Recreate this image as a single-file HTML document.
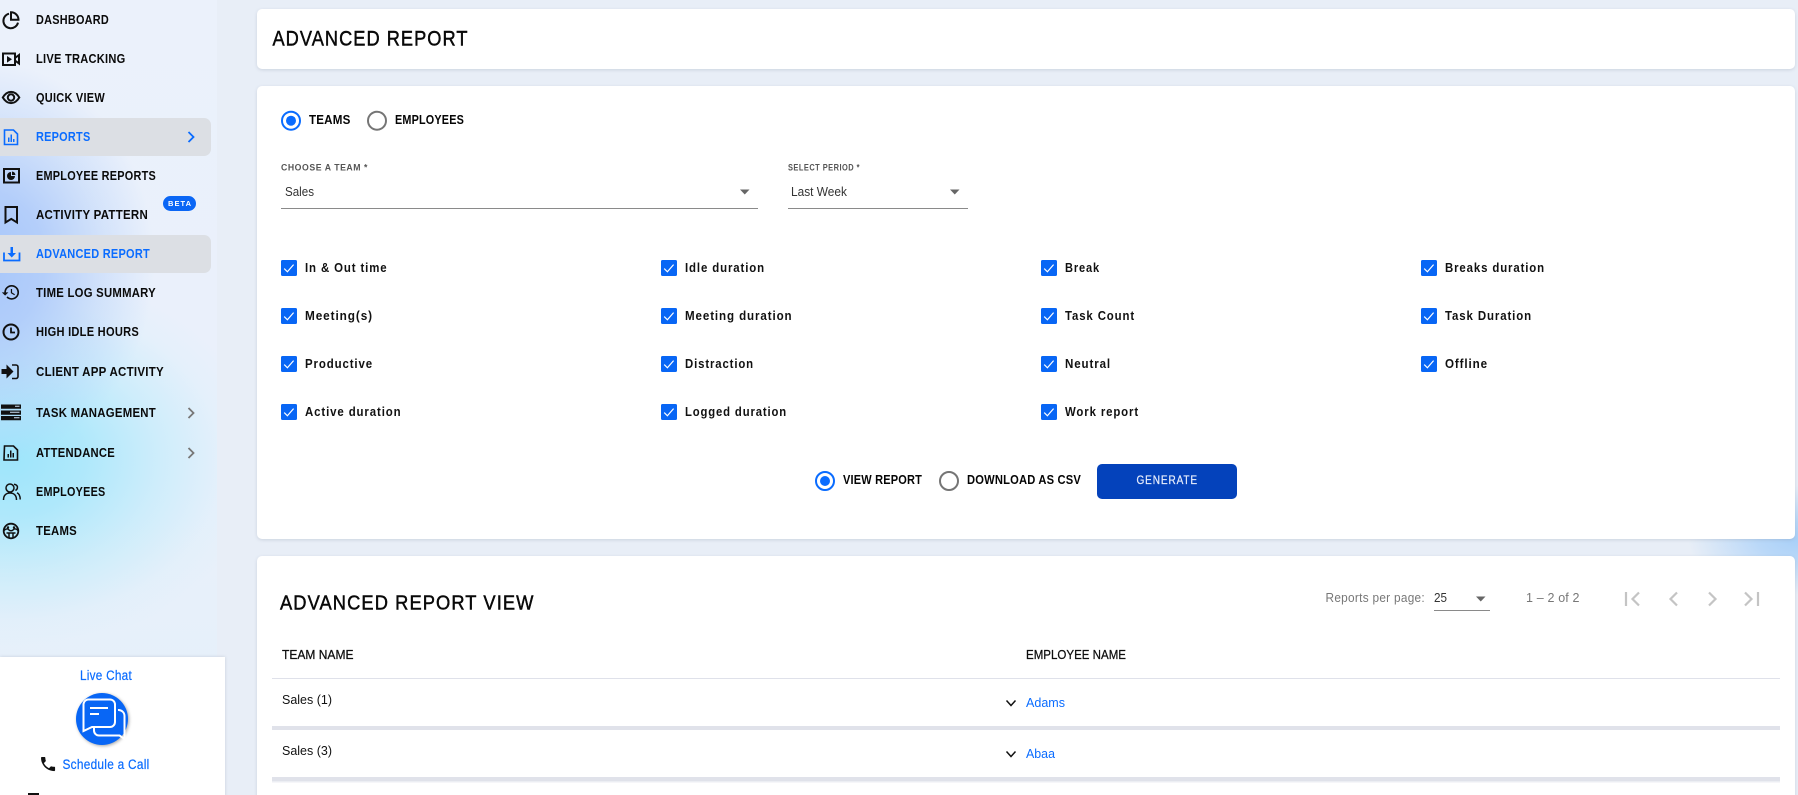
<!DOCTYPE html>
<html lang="en"><head><meta charset="utf-8"><title>Advanced Report</title>
<style>
html,body{margin:0;padding:0;width:1798px;height:795px;overflow:hidden;background:#e8eef7}
#bg{position:absolute;left:0;top:0;width:1798px;height:795px;background:
radial-gradient(ellipse 110px 55px at 1798px 540px,#a9d0f8 0%,rgba(169,208,248,.75) 35%,rgba(232,238,247,0) 100%),
#e8eef7}
#side{position:absolute;left:0;top:0;width:217px;height:795px;background:
radial-gradient(ellipse 170px 200px at -15px 262px,rgba(166,198,250,1) 0%,rgba(170,200,250,.85) 35%,rgba(176,205,250,.4) 70%,rgba(176,205,250,0) 100%),
radial-gradient(ellipse 250px 190px at 10px 460px,rgba(158,229,251,1) 0%,rgba(165,231,251,.85) 30%,rgba(180,234,251,.5) 60%,rgba(200,238,251,.15) 85%,rgba(200,238,251,0) 100%),
linear-gradient(#ebf1fb 0%,#e9f0fb 60%,#e4eff9 100%)}
svg{position:absolute;left:0;top:0}
text{font-family:"Liberation Sans",sans-serif;white-space:pre}
.n{font-size:13px;font-weight:700;fill:#0a0a0a;letter-spacing:.3px}
.b{fill:#0a6cff}
.c{font-size:13px;font-weight:700;fill:#111;letter-spacing:1px}
.r{font-size:12.5px;font-weight:700;fill:#050505;letter-spacing:.2px}
.l{font-size:9.5px;font-weight:700;fill:#555;letter-spacing:.6px}
.v{font-size:13px;fill:#333}
.g{font-size:12.5px;fill:#777}
.t{font-size:13px;fill:#111}
.h{stroke:#000;stroke-width:.3px}
.i{fill:none;stroke:#111;stroke-width:2}
.card{fill:#fff;filter:drop-shadow(0 1px 1.5px rgba(120,130,150,.25))}
</style></head><body>
<div id="bg"></div><div id="side"></div>
<svg width="1798" height="795" viewBox="0 0 1798 795" xmlns="http://www.w3.org/2000/svg">
<defs>
<g id="cb"><rect width="16" height="16" rx="1.5" fill="#0866f5"/><path d="M3.2 8.6l3.2 3.2 6.2-7.2" fill="none" stroke="#fff" stroke-width="1.2"/></g>
<g id="ron"><circle r="9" fill="none" stroke="#0a6cff" stroke-width="2"/><circle r="5" fill="#0a6cff"/></g>
<g id="roff"><circle r="9" fill="none" stroke="#757575" stroke-width="2"/></g>
</defs>

<!-- cards -->
<rect class="card" x="257" y="9" width="1538" height="60" rx="5"/>
<rect class="card" x="257" y="86" width="1538" height="453" rx="5"/>
<rect class="card" x="257" y="556" width="1538" height="260" rx="5"/>

<!-- sidebar highlights -->
<rect x="-10" y="118" width="221" height="38" rx="7" fill="#dcdfe4"/>
<rect x="-10" y="235" width="221" height="38" rx="7" fill="#dcdfe4"/>

<!-- sidebar icons -->
<path class="i" d="M9 13.7A7.4 7.4 0 1 0 18 22.6" stroke-width="1.8"/><path class="i" d="M11 12.3a7.5 7.5 0 0 1 7.5 7.5H11z" stroke-width="1.8"/>
<rect class="i" x="3" y="53.5" width="12" height="11.5"/><path d="M7 56l5 3.3-5 3.3z" fill="#111"/><path class="i" d="M15 58l4-3v8.500l-4-3"/>
<path class="i" d="M2.800 97.500c4.500-7.500 12-7.500 16.500 0c-4.500 7.500-12 7.500-16.500 0z" stroke-width="1.600"/><circle class="i" cx="11" cy="97.500" r="3.200" stroke-width="1.600"/>
<path d="M4.500 130h9l4 4v10.500h-13z" fill="none" stroke="#0a6cff" stroke-width="1.600"/><path d="M8 137.500h1.500v4.500H8zM10.500 134.500H12v7.500h-1.500zM13 139h1.500v3H13z" fill="#0a6cff"/>
<rect class="i" x="4" y="169" width="15" height="13.500"/><path d="M11 172a4 4 0 1 0 4 4h-4z" fill="#111"/><path d="M12 171.500a4 4 0 0 1 3.500 3.500H12z" fill="#111"/>
<path class="i" d="M5.500 207h11.500v15.500l-5.750-3.600-5.750 3.600z" stroke-width="1.700"/>
<path d="M4 252.500v8h15.500v-8" fill="none" stroke="#0a6cff" stroke-width="1.800"/><path d="M10.500 247h2.500v6h3l-4.250 4.500L7.500 253h3z" fill="#0a6cff"/>
<g transform="translate(1 282.500) scale(.82)"><path d="M13 3a9 9 0 0 0-9 9H1l3.890 3.890.07.140L9 12H6c0-3.870 3.130-7 7-7s7 3.130 7 7-3.130 7-7 7c-1.930 0-3.680-.790-4.940-2.060l-1.420 1.420A8.954 8.954 0 0 0 13 21a9 9 0 0 0 0-18zm-1 5v5l4.280 2.540.720-1.210-3.500-2.080V8H12z" fill="#111"/></g>
<circle class="i" cx="11" cy="332" r="7.500" stroke-width="1.800"/><path d="M11 327.500v5h4" fill="none" stroke="#111" stroke-width="1.800"/>
<path d="M1.500 369h5v-4.500l7 7-7 7V374h-5z" fill="#111"/><path d="M12 365h4a2 2 0 0 1 2 2v9.500a2 2 0 0 1-2 2h-4" fill="none" stroke="#111" stroke-width="1.600"/>
<path d="M1 404.500h20v4.300H1zM1 410.500h20v4.300H1zM1 416h20v4.300H1z" fill="#111"/><path d="M15 406.200h4.500M10 412.200h9.500M14 417.700h5.500" stroke="#cfe3f8" stroke-width="1"/>
<path d="M4.500 446h9l4 4v10h-13.500z" fill="none" stroke="#111" stroke-width="1.600"/><path d="M7.500 454h1.500v3.500H7.500zM10 450.500h1.500v7H10zM12.500 453h1.500v4.500h-1.500z" fill="#111"/>
<circle cx="10" cy="488" r="4" fill="none" stroke="#111" stroke-width="1.500"/><path d="M3.500 500c0-4.800 2.800-7 6.500-7s6.500 2.200 6.500 7" fill="none" stroke="#111" stroke-width="1.500"/><path d="M14 484.200c2.600.2 3.800 2 3.400 3.800-.2 1.200-1 2-2 2.400M17 492.800c2 .8 3.200 3 3.200 6.700" fill="none" stroke="#111" stroke-width="1.500"/>
<circle cx="11" cy="531" r="7.300" fill="none" stroke="#111" stroke-width="1.800"/><path d="M4 530.500c2-2 4-2 5-.5 1 1 3 1 4 0 1-1.500 3.500-1.500 5 .5M6.500 533h9M9 533v4.500M13 533v4.500" fill="none" stroke="#111" stroke-width="1.500"/><circle cx="8" cy="527.500" r="1.200" fill="#111"/><circle cx="14" cy="527.500" r="1.200" fill="#111"/>

<path d="M188.500 132l5 5-5 5" fill="none" stroke="#0a6cff" stroke-width="1.800"/>
<path d="M188.500 408l5 5-5 5M188.500 448l5 5-5 5" fill="none" stroke="#777" stroke-width="1.800"/>

<!-- sidebar text -->
<text class="n" x="36" y="24" textLength="73" lengthAdjust="spacingAndGlyphs">DASHBOARD</text>
<text class="n" x="36" y="63" textLength="89.500" lengthAdjust="spacingAndGlyphs">LIVE TRACKING</text>
<text class="n" x="36" y="102" textLength="69" lengthAdjust="spacingAndGlyphs">QUICK VIEW</text>
<text class="n b" x="36" y="141" textLength="54.500" lengthAdjust="spacingAndGlyphs">REPORTS</text>
<text class="n" x="36" y="180" textLength="120" lengthAdjust="spacingAndGlyphs">EMPLOYEE REPORTS</text>
<text class="n" x="36" y="219" textLength="112" lengthAdjust="spacingAndGlyphs">ACTIVITY PATTERN</text>
<text class="n b" x="36" y="258" textLength="114" lengthAdjust="spacingAndGlyphs">ADVANCED REPORT</text>
<text class="n" x="36" y="297" textLength="120" lengthAdjust="spacingAndGlyphs">TIME LOG SUMMARY</text>
<text class="n" x="36" y="336" textLength="103" lengthAdjust="spacingAndGlyphs">HIGH IDLE HOURS</text>
<text class="n" x="36" y="376" textLength="128" lengthAdjust="spacingAndGlyphs">CLIENT APP ACTIVITY</text>
<text class="n" x="36" y="417" textLength="120" lengthAdjust="spacingAndGlyphs">TASK MANAGEMENT</text>
<text class="n" x="36" y="457" textLength="79" lengthAdjust="spacingAndGlyphs">ATTENDANCE</text>
<text class="n" x="36" y="496" textLength="69.500" lengthAdjust="spacingAndGlyphs">EMPLOYEES</text>
<text class="n" x="36" y="535" textLength="41" lengthAdjust="spacingAndGlyphs">TEAMS</text>

<rect x="163" y="196" width="33" height="15" rx="7.500" fill="#0a66f5"/>
<text x="168" y="206" font-size="7.500" font-weight="700" fill="#fff" textLength="23" lengthAdjust="spacing">BETA</text>

<!-- bottom panel -->
<rect x="0" y="657" width="225" height="140" fill="#fff" style="filter:drop-shadow(0 0 1.500px rgba(120,130,150,.3))"/>
<text class="h" x="80" y="680" font-size="13.500" fill="#0a6cff" style="stroke:#0a6cff;stroke-width:.2px;letter-spacing:.3px" textLength="52" lengthAdjust="spacingAndGlyphs">Live Chat</text>
<circle cx="102" cy="719" r="26" fill="#0866f5" style="filter:drop-shadow(1px 1.500px 1.500px rgba(0,0,0,.35))"/>
<path d="M88 699.500h22a5 5 0 0 1 5 5v17.500a5 5 0 0 1-5 5H92l-8.500 4v-27a5 5 0 0 1 4.500-4.500z" fill="none" stroke="#fff" stroke-width="2"/>
<path d="M90 708h18M90 714h9" stroke="#fff" stroke-width="2"/>
<path d="M118 710a6 6 0 0 1 6.500 6v23l-5-3.500H99a5 5 0 0 1-5-5v-3" fill="none" stroke="#fff" stroke-width="2"/>
<g transform="translate(38.700 754.700) scale(.78)"><path d="M6.620 10.790c1.440 2.830 3.760 5.140 6.590 6.590l2.200-2.200c.27-.27.670-.36 1.020-.24 1.120.37 2.330.57 3.570.57.550 0 1 .45 1 1V20c0 .55-.45 1-1 1-9.390 0-17-7.610-17-17 0-.55.450-1 1-1h3.500c.55 0 1 .45 1 1 0 1.250.2 2.450.57 3.570.11.350.03.740-.25 1.020l-2.200 2.200z" fill="#111"/></g>
<text x="62.500" y="769" font-size="13.500" fill="#0a6cff" style="stroke:#0a6cff;stroke-width:.2px;letter-spacing:.3px" textLength="87" lengthAdjust="spacingAndGlyphs">Schedule a Call</text>
<rect x="28" y="793" width="11" height="2" fill="#111"/>

<!-- title -->
<text class="h" x="272.500" y="45.700" font-size="21" fill="#0a0a0a" style="letter-spacing:1.200px;stroke-width:.45px" textLength="196" lengthAdjust="spacingAndGlyphs">ADVANCED REPORT</text>

<!-- radios -->
<use href="#ron" x="291" y="120.700"/>
<text class="r" x="309" y="124" textLength="41.500" lengthAdjust="spacingAndGlyphs">TEAMS</text>
<use href="#roff" x="377" y="120.700"/>
<text class="r" x="395" y="124" textLength="69" lengthAdjust="spacingAndGlyphs">EMPLOYEES</text>

<!-- selects -->
<text class="l" x="281" y="170.300" textLength="87" lengthAdjust="spacingAndGlyphs">CHOOSE A TEAM *</text>
<text class="v" x="285" y="196" textLength="29" lengthAdjust="spacingAndGlyphs">Sales</text>
<path d="M740 189.500h9.500l-4.750 5z" fill="#666"/>
<rect x="281" y="208" width="477" height="1" fill="#8a8a8a"/>
<text class="l" x="788" y="170.300" textLength="72" lengthAdjust="spacingAndGlyphs">SELECT PERIOD *</text>
<text class="v" x="791" y="196" textLength="56" lengthAdjust="spacingAndGlyphs">Last Week</text>
<path d="M950 189.500h9.500l-4.750 5z" fill="#666"/>
<rect x="788" y="208" width="180" height="1" fill="#8a8a8a"/>

<!-- checkboxes -->
<use href="#cb" x="281" y="260"/><use href="#cb" x="661" y="260"/><use href="#cb" x="1041" y="260"/><use href="#cb" x="1421" y="260"/>
<use href="#cb" x="281" y="308"/><use href="#cb" x="661" y="308"/><use href="#cb" x="1041" y="308"/><use href="#cb" x="1421" y="308"/>
<use href="#cb" x="281" y="356"/><use href="#cb" x="661" y="356"/><use href="#cb" x="1041" y="356"/><use href="#cb" x="1421" y="356"/>
<use href="#cb" x="281" y="404"/><use href="#cb" x="661" y="404"/><use href="#cb" x="1041" y="404"/>

<text class="c" x="305" y="272" textLength="82.500" lengthAdjust="spacingAndGlyphs">In &amp; Out time</text>
<text class="c" x="685" y="272" textLength="80" lengthAdjust="spacingAndGlyphs">Idle duration</text>
<text class="c" x="1065" y="272" textLength="35" lengthAdjust="spacingAndGlyphs">Break</text>
<text class="c" x="1445" y="272" textLength="100" lengthAdjust="spacingAndGlyphs">Breaks duration</text>
<text class="c" x="305" y="320" textLength="68" lengthAdjust="spacingAndGlyphs">Meeting(s)</text>
<text class="c" x="685" y="320" textLength="107.500" lengthAdjust="spacingAndGlyphs">Meeting duration</text>
<text class="c" x="1065" y="320" textLength="70" lengthAdjust="spacingAndGlyphs">Task Count</text>
<text class="c" x="1445" y="320" textLength="87" lengthAdjust="spacingAndGlyphs">Task Duration</text>
<text class="c" x="305" y="368" textLength="68" lengthAdjust="spacingAndGlyphs">Productive</text>
<text class="c" x="685" y="368" textLength="69" lengthAdjust="spacingAndGlyphs">Distraction</text>
<text class="c" x="1065" y="368" textLength="46" lengthAdjust="spacingAndGlyphs">Neutral</text>
<text class="c" x="1445" y="368" textLength="43" lengthAdjust="spacingAndGlyphs">Offline</text>
<text class="c" x="305" y="416" textLength="96.500" lengthAdjust="spacingAndGlyphs">Active duration</text>
<text class="c" x="685" y="416" textLength="102" lengthAdjust="spacingAndGlyphs">Logged duration</text>
<text class="c" x="1065" y="416" textLength="74" lengthAdjust="spacingAndGlyphs">Work report</text>

<!-- action row -->
<use href="#ron" x="825" y="481"/>
<text class="r" x="843" y="484" textLength="79" lengthAdjust="spacingAndGlyphs">VIEW REPORT</text>
<use href="#roff" x="949" y="481"/>
<text class="r" x="967" y="484" textLength="114" lengthAdjust="spacingAndGlyphs">DOWNLOAD AS CSV</text>
<rect x="1097" y="464" width="140" height="35" rx="5" fill="#0442bb"/>
<text x="1136.500" y="484" font-size="11.500" fill="#e6ecfb" style="stroke:#e6ecfb;stroke-width:.25px;letter-spacing:1px" textLength="61.500" lengthAdjust="spacingAndGlyphs">GENERATE</text>

<!-- view header -->
<text class="h" x="280" y="609.500" font-size="20.500" fill="#0a0a0a" style="letter-spacing:1.200px;stroke-width:.45px" textLength="254.500" lengthAdjust="spacingAndGlyphs">ADVANCED REPORT VIEW</text>
<text class="g" x="1325.500" y="602" style="letter-spacing:.3px" textLength="99.500" lengthAdjust="spacingAndGlyphs">Reports per page:</text>
<text class="t" x="1434" y="602" style="fill:#333" textLength="13" lengthAdjust="spacingAndGlyphs">25</text>
<path d="M1476 596.500h9.500l-4.750 5z" fill="#666"/>
<rect x="1434" y="610" width="56" height="1" fill="#8a8a8a"/>
<text class="g" x="1526" y="602" textLength="53.500" lengthAdjust="spacing">1 – 2 of 2</text>
<path d="M1626 592v14M1639 592.500l-6.500 6.500 6.500 6.500M1677 592.500l-6.500 6.500 6.500 6.500M1709 592.500l6.500 6.500-6.500 6.500M1745 592.500l6.500 6.500-6.500 6.500M1758 592v14" fill="none" stroke="#c4c4c4" stroke-width="2.200"/>

<!-- table -->
<text class="t h" x="282" y="659" style="stroke-width:.25px" textLength="71.500" lengthAdjust="spacingAndGlyphs">TEAM NAME</text>
<text class="t h" x="1026" y="659" style="stroke-width:.25px" textLength="100" lengthAdjust="spacingAndGlyphs">EMPLOYEE NAME</text>
<rect x="272" y="678" width="1508" height="1" fill="#dfe1ea"/>
<text class="t" x="282" y="704" textLength="50" lengthAdjust="spacingAndGlyphs">Sales (1)</text>
<path d="M1006.500 700.500l4.500 5 4.500-5M1006.500 751.500l4.500 5 4.500-5" fill="none" stroke="#111" stroke-width="1.500"/>
<text class="b" x="1026" y="707" font-size="13" textLength="39" lengthAdjust="spacingAndGlyphs">Adams</text>
<rect x="272" y="726" width="1508" height="4" fill="#e0e2ea"/>
<text class="t" x="282" y="755" textLength="50" lengthAdjust="spacingAndGlyphs">Sales (3)</text>
<text class="b" x="1026" y="758" font-size="13" textLength="29" lengthAdjust="spacingAndGlyphs">Abaa</text>
<rect x="272" y="777" width="1508" height="4" fill="#e0e2ea"/>
<rect x="272" y="781" width="1508" height="1.500" fill="#eceef3"/>
</svg>
</body></html>
